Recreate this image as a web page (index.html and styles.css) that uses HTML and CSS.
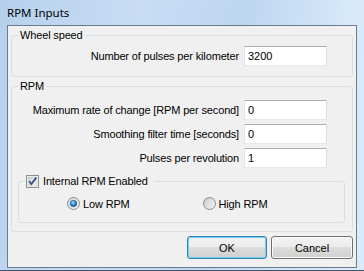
FILE: index.html
```html
<!DOCTYPE html>
<html lang="en">
<head>
    <meta charset="UTF-8">
    <title>RPM Inputs</title>
    <link rel="stylesheet" href="styles.css">
</head>
<body>

<div class="window"> <!-- Dialog window -->
    <div class="titlebar">RPM Inputs</div>
    <div class="client">
        <fieldset class="group">
            <legend>Wheel speed</legend>
            <div class="rows">
                <div class="row">
                    <label for="pulsesKm">Number of pulses per kilometer</label>
                    <input type="text" id="pulsesKm" value="3200">
                </div>
            </div>
        </fieldset>

        <fieldset class="group group-rpm">
            <legend>RPM</legend>
            <div class="rows">
                <div class="row">
                    <label for="maxRate">Maximum rate of change [RPM per second]</label>
                    <input type="text" id="maxRate" value="0">
                </div>
                <div class="row">
                    <label for="smoothing">Smoothing filter time [seconds]</label>
                    <input type="text" id="smoothing" value="0">
                </div>
                <div class="row">
                    <label for="pulsesRev">Pulses per revolution</label>
                    <input type="text" id="pulsesRev" value="1">
                </div>
            </div>

            <fieldset class="subgroup">
                <legend class="check-legend">
                    <svg class="checkbox" width="13" height="13" viewBox="0 0 13 13">
                        <defs>
                            <linearGradient id="cbFill" x1="0" y1="0" x2="1" y2="1">
                                <stop offset="0" stop-color="#cbcfd5"/>
                                <stop offset="1" stop-color="#f6f6f6"/>
                            </linearGradient>
                        </defs>
                        <rect x="0.5" y="0.5" width="12" height="12" fill="#fff" stroke="#8e8f8f"/>
                        <rect x="2" y="2" width="9" height="9" fill="url(#cbFill)" stroke="#b4b7bd" stroke-width="0.6"/>
                        <polyline points="3.2,6.2 5.4,9 10.2,2.6" fill="none" stroke="#3a4f8a" stroke-width="1.8"/>
                    </svg>
                    Internal RPM Enabled
                </legend>
                <div class="radios">
                    <div class="radio">
                        <svg width="13" height="13" viewBox="0 0 13 13">
                            <defs>
                                <linearGradient id="rdRing" x1="0" y1="0" x2="1" y2="1">
                                    <stop offset="0" stop-color="#d6d6d6"/>
                                    <stop offset="1" stop-color="#fafafa"/>
                                </linearGradient>
                                <radialGradient id="rdDot" cx="0.4" cy="0.35" r="0.7">
                                    <stop offset="0" stop-color="#a6def9"/>
                                    <stop offset="0.5" stop-color="#2e8fd6"/>
                                    <stop offset="1" stop-color="#14508c"/>
                                </radialGradient>
                            </defs>
                            <circle cx="6.5" cy="6.5" r="6" fill="url(#rdRing)" stroke="#8b8b8b"/>
                            <circle cx="6.5" cy="6.5" r="3.3" fill="url(#rdDot)" stroke="#1b4b7c" stroke-width="0.5"/>
                        </svg>
                        <span>Low RPM</span>
                    </div>
                    <div class="radio">
                        <svg width="13" height="13" viewBox="0 0 13 13">
                            <defs>
                                <linearGradient id="rdOff" x1="0" y1="0" x2="1" y2="1">
                                    <stop offset="0" stop-color="#c9c9c9"/>
                                    <stop offset="1" stop-color="#f7f7f7"/>
                                </linearGradient>
                            </defs>
                            <circle cx="6.5" cy="6.5" r="6" fill="url(#rdOff)" stroke="#8b8b8b"/>
                        </svg>
                        <span>High RPM</span>
                    </div>
                </div>
            </fieldset>
        </fieldset>

        <div class="buttons">
            <button class="btn btn-default btn-ok">OK</button>
            <button class="btn btn-cancel">Cancel</button>
        </div>
    </div>
</div>

</body>
</html>
```

FILE: styles.css
```css
/* page */
body {
    margin: 0;
    font-family: "Liberation Sans", Arial, sans-serif;
    font-size: 11px;
    letter-spacing: -0.15px;
    color: #000;
}

/* window frame */
.window {
    width: 364px;
    height: 271px;
    box-sizing: border-box;
    padding: 0 7px 2px;
    border-bottom: 1px solid #44556a;
    background: linear-gradient(100deg, #b6d0ec 0%, #c8ddf4 35%, #bdd6f1 60%, #d6e8f9 85%, #dcebfa 100%);
}
.titlebar {
    height: 25px;
    line-height: 25px;
    font-family: "Noto Sans", sans-serif;
    font-size: 11.5px;
    letter-spacing: 0;
    color: #000;
}

/* client area */
.client {
    height: 243px;
    box-sizing: border-box;
    border: 1px solid #6b7a8c;
    background: #f0f0f0;
    padding: 3px 3px 0;
}

/* group boxes */
.group {
    margin: 0 0 3px;
    border: 1px solid #d5dfe5;
    border-radius: 3px;
    padding: 4px 7px 10px 6px;
    min-width: 0;
}
.group legend, .subgroup legend {
    padding: 0 2px;
    line-height: 13px;
}
.group-rpm {
    padding: 7px 7px 8px 6px;
    margin-bottom: 4px;
}
.rows {
    display: flex;
    flex-direction: column;
    gap: 4px;
    padding-right: 18px;
}
.row {
    display: flex;
    justify-content: flex-end;
    align-items: center;
    gap: 5px;
    height: 20px;
}
.row input {
    width: 83px;
    height: 20px;
    box-sizing: border-box;
    border: 1px solid;
    border-color: #abadb3 #dbdfe6 #e3e9ef #e2e3ea;
    padding: 0 3px;
    margin: 0;
    font: inherit;
    background: #fff;
    outline: none;
}

/* internal rpm box */
.subgroup {
    margin: 7px 0 0;
    border: 1px solid #d5dfe5;
    border-radius: 3px;
    padding: 9px 6px 12px 6px;
    min-width: 0;
}
.subgroup .check-legend {
    display: flex;
    align-items: center;
    gap: 4px;
    padding: 0 6px 0 1px;
}
.radios {
    display: flex;
    align-items: center;
    height: 13px;
    padding-left: 42px;
}
.radio {
    display: flex;
    align-items: center;
    gap: 3px;
    width: 149px;
}
.radio svg, .checkbox {
    display: block;
    flex-shrink: 0;
}

/* buttons */
.buttons {
    display: flex;
    justify-content: flex-end;
    gap: 4px;
}
.btn {
    height: 23px;
    box-sizing: border-box;
    border: 1px solid #707070;
    border-radius: 3px;
    background: linear-gradient(#f2f2f2 0%, #ebebeb 50%, #dddddd 50%, #cfcfcf 100%);
    box-shadow: inset 0 0 0 1px #fbfbfb;
    font: inherit;
    color: #000;
    padding: 0;
}
.btn-ok {
    width: 80px;
}
.btn-cancel {
    width: 82px;
}
.btn-default {
    border-color: #3c7fb1;
    box-shadow: inset 0 0 0 1px #6fd0f5;
}
```
